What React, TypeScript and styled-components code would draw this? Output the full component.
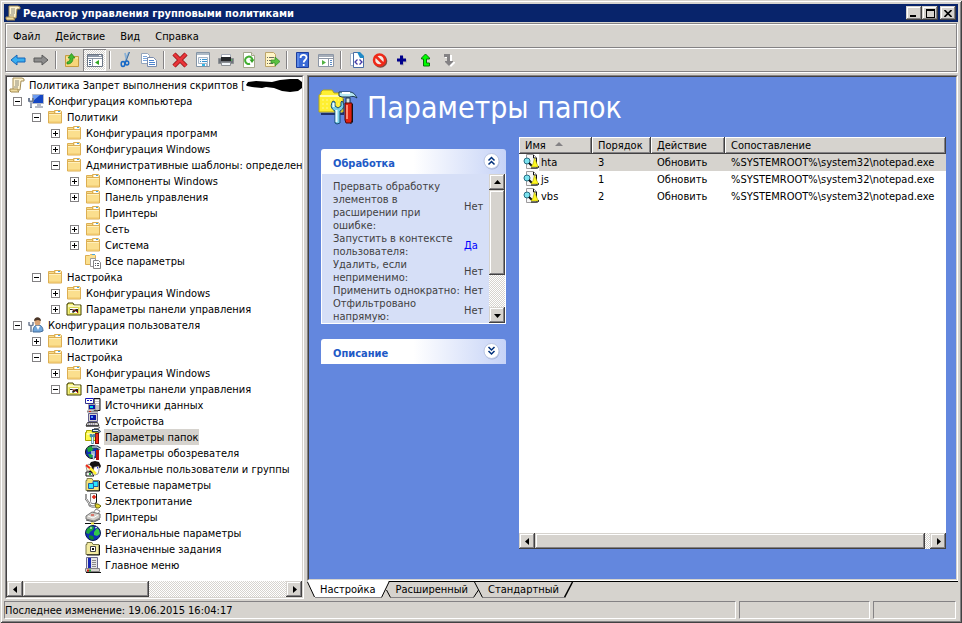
import React from "react";
import styled, { createGlobalStyle, css } from "styled-components";

const face = "#d6d3ce";
const gray = "#848284";
const dark = "#424142";
const blue = "#6387de";
const font = '"DejaVu Sans Condensed", "DejaVu Sans", sans-serif';

const raised = css`
  background: ${face};
  box-shadow: inset -1px -1px ${dark}, inset 1px 1px ${face}, inset -2px -2px ${gray}, inset 2px 2px #fff;
`;

const Global = createGlobalStyle`
  * { box-sizing: border-box; }
  body { margin: 0; background: ${face}; color: #000; font: 11px/16px ${font}; }
  button { font: inherit; color: inherit; margin: 0; padding: 0; border: 0; background: none; }
  ul { list-style: none; margin: 0; padding: 0; }
  svg { display: block; flex: none; }
`;

/* ---------- window ---------- */
const Window = styled.div`
  display: flex;
  flex-direction: column;
  height: 100vh;
  padding: 4px;
  background: ${face};
  box-shadow: inset 1px 1px ${face}, inset -1px -1px ${dark}, inset 2px 2px #fff, inset -2px -2px ${gray};
`;
const TitleBar = styled.header`
  display: flex;
  align-items: center;
  gap: 2px;
  height: 18px;
  padding: 0 2px 0 1px;
  background: #08246b;
  color: #fff;
`;
const WindowTitle = styled.h1`
  flex: 1;
  margin: 0;
  padding-top: 2px;
  font-size: 11px;
  font-weight: bold;
`;
const CaptionButton = styled.button<{ $spaced?: boolean }>`
  ${raised}
  display: grid;
  place-items: center;
  width: 16px;
  height: 14px;
  margin-left: ${(p) => (p.$spaced ? 0 : -2)}px;
`;
const Bars = styled.div`
  margin: 1px 1px 0;
  border: 1px solid ${gray};
  box-shadow: 1px 1px 0 #fff, inset 1px 1px 0 #fff;
`;
const MenuBar = styled.nav`
  display: flex;
  gap: 15px;
  align-items: center;
  height: 24px;
  padding: 2px 7px 0;
  border-bottom: 1px solid ${gray};
`;
const MenuItem = styled.button``;
const ToolBar = styled.div`
  display: flex;
  align-items: center;
  height: 23px;
  border-top: 1px solid #fff;
`;
const ToolButton = styled.button<{ $pressed?: boolean }>`
  display: flex;
  align-items: center;
  justify-content: center;
  width: 23px;
  height: 22px;
  ${(p) =>
    p.$pressed &&
    css`
      background: repeating-conic-gradient(#fff 0 25%, ${face} 0 50%) 0 0 / 2px 2px;
      box-shadow: inset 1px 1px ${gray}, inset -1px -1px #fff;
    `}
`;
const Separator = styled.span`
  width: 2px;
  height: 18px;
  margin: 0 3px;
  border-left: 1px solid ${gray};
  border-right: 1px solid #fff;
`;

/* ---------- panes ---------- */
const Body = styled.div`
  display: flex;
  flex: 1;
  min-height: 0;
  gap: 3px;
  margin: 3px 0 2px 1px;
`;
const Sunken = styled.div`
  display: flex;
  flex-direction: column;
  flex: 1;
  min-height: 0;
  min-width: 0;
  border: 1px solid;
  border-color: ${dark} ${face} ${face} ${dark};
`;
const TreePane = styled.aside`
  display: flex;
  flex: none;
  width: 32%;
  min-width: 240px;
  max-width: 299px;
  border: 1px solid;
  border-color: ${gray} #fff #fff ${gray};
`;
const Tree = styled.ul`
  flex: 1;
  min-height: 0;
  overflow: hidden;
  background: #fff;
`;
const TreeRow = styled.li<{ $level: number }>`
  display: flex;
  align-items: center;
  height: 16px;
  padding-left: ${(p) => 2 + p.$level * 19}px;
  white-space: nowrap;
`;
const Expander = styled.button`
  display: grid;
  place-items: center;
  flex: none;
  width: 9px;
  height: 9px;
  margin-left: -15px;
  margin-right: 6px;
  border: 1px solid ${gray};
  background: #fff;
`;
const TreeLabel = styled.span<{ $selected?: boolean }>`
  height: 16px;
  margin-left: 3px;
  padding: 0 1px;
  line-height: 18px;
  background: ${(p) => (p.$selected ? face : "transparent")};
`;

const Bar = styled.div<{ $vertical?: boolean }>`
  display: flex;
  flex: none;
  flex-direction: ${(p) => (p.$vertical ? "column" : "row")};
  ${(p) => (p.$vertical ? "width" : "height")}: 16px;
  background: repeating-conic-gradient(#fff 0 25%, ${face} 0 50%) 0 0 / 2px 2px;
`;
const BarButton = styled.button`
  ${raised}
  display: grid;
  place-items: center;
  width: 16px;
  height: 16px;
  flex: none;
`;
const Thumb = styled.div<{ $grow: number }>`
  ${raised}
  flex: ${(p) => p.$grow} 0 0;
`;
const Track = styled.div<{ $grow: number }>`
  flex: ${(p) => p.$grow} 0 0;
`;

const DetailPane = styled.main`
  display: flex;
  flex-direction: column;
  flex: 1;
  min-width: 0;
`;
const DetailFrame = styled.div`
  display: flex;
  flex: 1;
  min-height: 0;
  border: 1px solid;
  border-color: ${gray} #fff #fff ${gray};
`;
const Detail = styled.div`
  display: flex;
  flex-direction: column;
  flex: 1;
  min-height: 0;
  padding: 0 10px 30px 9px;
  background: ${blue};
`;
const Heading = styled.div`
  display: flex;
  align-items: center;
  gap: 9px;
  height: 60px;
  padding-top: 2px;
  color: #fff;
`;
const HeadingText = styled.h2`
  margin: 0;
  font-size: 30px;
  line-height: 36px;
  font-weight: normal;
`;
const Columns = styled.div`
  display: flex;
  flex: 1;
  min-height: 0;
  gap: 13px;
  padding-left: 3px;
`;
const Cards = styled.div`
  display: flex;
  flex-direction: column;
  flex: none;
  gap: 15px;
  width: 185px;
  padding-top: 12px;
`;
const Card = styled.section``;
const CardHeader = styled.div`
  display: flex;
  align-items: center;
  justify-content: space-between;
  height: 25px;
  padding: 0 6px 0 12px;
  border-radius: 3px 3px 0 0;
  background: linear-gradient(90deg, #fff 50%, #c6d3f7);
`;
const CardTitle = styled.h3`
  margin: 4px 0 0;
  font-size: 11px;
  color: #2159c6;
`;
const CardBody = styled.div`
  display: flex;
  border: 1px solid #fff;
  border-top: 0;
  background: #d6dff7;
`;
const Properties = styled.table`
  flex: 1;
  margin: 6px 0 0 11px;
  border-collapse: collapse;
  line-height: 13px;
  color: #424142;
  white-space: nowrap;
`;
const PropertyName = styled.th`
  padding: 0;
  font-weight: normal;
  text-align: left;
`;
const PropertyValue = styled.td<{ $on?: boolean }>`
  width: 25px;
  padding: 0;
  vertical-align: middle;
  color: ${(p) => (p.$on ? "#0000ff" : "inherit")};
`;

const ListBox = styled.section`
  display: flex;
  flex-direction: column;
  flex: 1;
  min-width: 0;
  overflow: hidden;
  background: #fff;
`;
const ListArea = styled.div`
  flex: 1;
  min-height: 0;
`;
const ListTable = styled.table`
  width: 100%;
  table-layout: fixed;
  border-collapse: collapse;
  white-space: nowrap;
`;
const ColumnHead = styled.th<{ $width?: number }>`
  height: 17px;
  width: ${(p) => (p.$width ? p.$width + "px" : "auto")};
  padding: 1px 6px 0;
  background: ${face};
  box-shadow: inset -1px -1px ${dark}, inset 1px 1px #fff, inset -2px -2px ${gray};
  font-weight: normal;
  line-height: 16px;
  text-align: left;
`;
const SortMark = styled.span`
  display: inline-block;
  margin: 0 0 3px 9px;
  border: 4px solid transparent;
  border-top: 0;
  border-bottom-color: ${gray};
`;
const Row = styled.tr<{ $selected?: boolean }>`
  height: 17px;
  background: ${(p) => (p.$selected ? face : "#fff")};
`;
const Cell = styled.td<{ $first?: boolean }>`
  padding: ${(p) => (p.$first ? "0" : "1px 6px 0")};
  line-height: 16px;
`;
const NameCell = styled.div`
  display: flex;
  gap: 2px;
  height: 17px;
  line-height: 18px;
`;
const FileIcon = styled.span`
  padding: 0 0 1px 4px;
  background: #fff;
`;

const Tabs = styled.div`
  display: flex;
  height: 18px;
  border-top: 1px solid #000;
  background: ${face};
`;
const Tab = styled.button<{ $active?: boolean }>`
  height: ${(p) => (p.$active ? 17 : 16)}px;
  margin-top: ${(p) => (p.$active ? -1 : 0)}px;
  padding: 0 5px;
  line-height: 15px;
  background: ${(p) => (p.$active ? "#fff" : face)};
  border-bottom: 1px solid ${gray};
`;
const TabEdge = styled.svg`
  margin-top: -1px;
`;

const StatusBar = styled.footer`
  display: flex;
  gap: 3px;
  height: 18px;
  padding-right: 2px;
`;
const StatusCell = styled.div<{ $width?: number }>`
  flex: ${(p) => (p.$width ? `0 0 ${p.$width}px` : "1")};
  min-width: 0;
  border: 1px solid;
  border-color: ${gray} #fff #fff ${gray};
  line-height: 18px;
  white-space: nowrap;
`;

/* ---------- icons ---------- */
const glyphs: Record<string, React.ReactNode> = {
  scroll: (
    <>
      <path d="M4 1h9l2 1v2h-3l-1 9H4z" fill="#fff3cf" stroke="#a48c52" />
      <path d="M1 12h8v2l1 1H2l-1-1z" fill="#f0dca0" stroke="#a48c52" />
      <path d="M6 4h4M6 6h4M6 8h4M5 10h4" stroke="#8c8a7b" />
    </>
  ),
  folder: (
    <>
      <path d="M1.500 2.500h6v3h-6z" fill="#f7dc8c" stroke="#dcae52" />
      <path d="M7.500 1.500h6l1 1v4h-7z" fill="#fbe9b0" stroke="#dcae52" />
      <path d="M9 3h4" stroke="#fff" strokeWidth="2" />
      <path d="M11 2.500h2" stroke="#4aa6de" />
      <path d="M1.500 4.500h13v9.500h-13z" fill="#fbdf8e" stroke="#dcae52" />
      <path d="M2 5.500h12" stroke="#fff0bd" />
      <path d="M2 13h12" stroke="#efc66b" />
    </>
  ),
  allSettings: (
    <>
      <path d="M.5 2.500h4l1-1h4l1 1v9H.5z" fill="#fbe08f" stroke="#dcae52" />
      <path d="M7 1.500h3" stroke="#4aa6de" />
      <path d="M5.500 5.500h5v8h-5z" fill="#fff" stroke="#9c9a9c" />
      <path d="M8.500 7.500h5l2 2v6h-7z" fill="#fff" stroke="#848284" />
      <path d="M10 10.500h1M12 10.500h2M10 12.500h1M12 12.500h2" stroke="#5a5d63" />
    </>
  ),
  computer: (
    <>
      <path d="M4.500 1.500h11v9h-11z" fill="#1547c4" stroke="#b5bac6" />
      <path d="M5 2h7L5 8z" fill="#6d9cf0" />
      <path d="M9 11h4v2h2v2H7v-2h2z" fill="#b5bac6" />
      <path d="M1 5v3l2 1 2-1V5M3 9v6" fill="none" stroke="#707d94" strokeWidth="2" />
      <path d="M3 9v5" stroke="#c6cede" />
    </>
  ),
  user: (
    <>
      <path d="M5 15c0-5 2-7 5-7s5 2 5 6l-3 1z" fill="#70a6dc" stroke="#426d9c" />
      <path d="M8 9h4l-2 4z" fill="#fff" />
      <ellipse cx="9.500" cy="5" rx="3" ry="3.500" fill="#d8a274" />
      <path d="M6 4c0-5 7-5 7 0l-3-1z" fill="#4b3627" />
      <path d="M1 5v3l2 1 2-1V5M3 9v6" fill="none" stroke="#707d94" strokeWidth="1.500" />
    </>
  ),
  controlPanel: (
    <>
      <path d="M1 3h1V2h5l1 2h7v10H1z" fill="#f5f27b" stroke="#424100" />
      <path d="M2 5h12" stroke="#fff" />
      <path d="M3.500 6.500h9v6h-9z" fill="#fff" stroke="#d6d352" />
      <path d="M4 8h2l2 1 2-1h2v3h-1l-1-1-3 2-1-1 1-2H4z" fill="#222" />
      <path d="M7 9h2M10 10l2 2" stroke="#c61810" />
    </>
  ),
  data: (
    <>
      <path d="M9 1.500h6v12H9z" fill="#c6c3c6" stroke="#111" />
      <path d="M10 3.500h4M10 5.500h4M10 7.500h4" stroke="#fff" />
      <path d="M.5 1.500h8v5h-8z" fill="#fff" stroke="#31318c" />
      <path d="M2 3.500h2M5 3.500h2" stroke="#1010c6" />
      <path d="M1 1.500h7" stroke="#1010c6" />
      <path d="M3.500 7.500h7v5h-7z" fill="#0a16a8" stroke="#a5a2a5" />
      <path d="M5 9h3v2H5z" fill="#00d6e8" />
      <path d="M2 14.500h11" stroke="#8c8a8c" strokeWidth="2" />
      <path d="M4 14.500h2" stroke="#e02010" />
    </>
  ),
  device: (
    <>
      <path d="M3.500.5h9v8h-9z" fill="#d6d3ce" stroke="#63618c" />
      <path d="M5 2h6v5H5z" fill="#0a16a8" />
      <path d="M6 3h2v2H6z" fill="#4f9dff" />
      <path d="M2.500 9.500h10l1.500 3H1z" fill="#d6d3ce" stroke="#444" />
      <path d="M3 11h8" stroke="#63618c" strokeDasharray="1 1" />
      <path d="M1 13.500h12l2 1-2 1H9" fill="none" stroke="#6b6b6b" />
    </>
  ),
  folderTools: (
    <>
      <path d="M.5 3.500h1v-2h5l1 2h5v8H.5z" fill="#fff94a" stroke="#a5a200" />
      <path d="M2 5h9" stroke="#fff" />
      <path d="M7 1.500h6l2 2" fill="none" stroke="#29415a" strokeWidth="3" />
      <path d="M8 1.500h5l2 2" fill="none" stroke="#e6f7ff" />
      <path d="M12 4v11" stroke="#7b0808" strokeWidth="4" />
      <path d="M12 5v9" stroke="#ef2918" strokeWidth="2" />
      <path d="M6 5v2l1.500 1L9 7V5M7.500 8v7" fill="none" stroke="#4a8ca5" strokeWidth="2.500" />
      <path d="M7.500 8v6" stroke="#d6f7ff" />
    </>
  ),
  globeTools: (
    <>
      <circle cx="7" cy="7" r="6.500" fill="#1031b5" stroke="#111" />
      <path d="M2 3l4-2 3 2-2 3-4 1zM3 9l4 0 1 3-3 1z" fill="#20a838" />
      <path d="M7 2h5l3 2" fill="none" stroke="#29415a" strokeWidth="3" />
      <path d="M7 2h5l3 2" fill="none" stroke="#e6f7ff" />
      <path d="M12.500 5v10" stroke="#b51010" strokeWidth="3" />
      <path d="M7 6v3l2 1V6M8.500 9v6" fill="none" stroke="#c6d6de" strokeWidth="1.500" />
    </>
  ),
  people: (
    <>
      <path d="M4 4l2-3 4-1 4 1 2 4-1 2-5-1-2 6-4-1z" fill="#111" />
      <path d="M9 6l5-1v4l-1 4-3 1-2-3z" fill="#fff" stroke="#555" strokeWidth=".6" />
      <path d="M1 5l3-2 3 3-2 4H2z" fill="#f7f2d6" stroke="#555" strokeWidth=".6" />
      <path d="M1 4l6 5" stroke="#ef2918" strokeWidth="2" />
      <path d="M5 7l6 6" stroke="#ffef31" strokeWidth="2.500" />
      <path d="M1 11h5l3 4H1z" fill="#efefef" stroke="#111" />
      <path d="M4 13h2" stroke="#20a838" strokeWidth="2" />
      <path d="M12.500 6v1.500" stroke="#2038ef" />
    </>
  ),
  network: (
    <>
      <path d="M1 3.500h1v-2h5l1 2h6v10H1z" fill="#f5e27b" stroke="#848252" />
      <path d="M14.500 4v10H2" fill="none" stroke="#111" />
      <path d="M8 4.500h5v5H8z" fill="#29e6ff" stroke="#2159a5" />
      <path d="M3.500 6.500h5v5h-5z" fill="#29e6ff" stroke="#2159a5" />
    </>
  ),
  power: (
    <>
      <path d="M5.500.5h6v8l-1 2h-4l-1-2z" fill="#f7f7f7" stroke="#848284" />
      <path d="M11.500 1v8l-1 2" fill="none" stroke="#111" />
      <path d="M7 4h4M9 2v4" stroke="#e02010" strokeWidth="1.500" />
      <path d="M1 1v5l3 4c0 4 4 4 7 3" fill="none" stroke="#555" strokeWidth="2" />
      <path d="M1 1v5l3 4c0 4 4 4 7 3" fill="none" stroke="#e6e6e6" />
      <path d="M10 11l3 0 3 2-2 2h-3z" fill="#e6d631" stroke="#6b6910" />
    </>
  ),
  printer: (
    <>
      <path d="M8 4l3-4 4 2-3 4z" fill="#fff" stroke="#848284" />
      <path d="M1 7l6-4 8 2v4l-6 3-8-2z" fill="#d0cdc8" stroke="#777" />
      <path d="M3 7l5 2 5-3" fill="none" stroke="#fff" />
      <path d="M6 6h3" stroke="#e02010" />
      <path d="M1 11l8 2 6-3" fill="none" stroke="#555" />
      <path d="M0 14.500h16" stroke="#111" />
      <path d="M6 14.500h3" stroke="#e6d631" strokeWidth="2" />
    </>
  ),
  globe: (
    <>
      <circle cx="8" cy="8" r="7.500" fill="#1031b5" stroke="#0a1a52" />
      <path d="M2 4l4-3 3 1-1 3-3 2-1 2-3-1z" fill="#20a838" />
      <path d="M9 7l3-4 2 2 1 4-3 2-3-1z" fill="#31c84a" />
      <path d="M4 10l4 1 1 3-2 1-3-2z" fill="#108828" />
      <path d="M10 3l2-1M5 3l2 0" stroke="#fff" />
    </>
  ),
  tasks: (
    <>
      <path d="M1 3.500h1v-2h5l1 2h6v10H1z" fill="#f2eaa0" stroke="#7b794a" />
      <path d="M14.500 4v10H2" fill="none" stroke="#111" />
      <path d="M5.500 5.500h5v5h-5z" fill="#fff" stroke="#424142" />
      <path d="M7 7h2v2H7z" fill="#111" />
    </>
  ),
  startMenu: (
    <>
      <path d="M1.500.5h11v11h-11z" fill="#e6e6e6" stroke="#6b6b8c" />
      <path d="M3 1h3v10H3z" fill="#1826b5" />
      <path d="M7 3.500h4M7 5.500h4M7 7.500h4M7 9.500h4" stroke="#8c8a8c" />
      <path d="M.5 11.500h14v3H.5z" fill="#d6d3ce" stroke="#848284" />
      <path d="M1 15.500h15" stroke="#111" />
      <path d="M2 13.500h2" stroke="#e02010" strokeWidth="2" />
      <path d="M4 13.500h2" stroke="#20a838" strokeWidth="2" />
    </>
  ),
  back: <path d="M1 8l6-5v3h8v4H7v3z" fill="#39aef0" stroke="#1565b8" />,
  forward: <path d="M15 8L9 3v3H1v4h8v3z" fill="#8c8c8c" stroke="#5a5a5a" />,
  up: (
    <>
      <path d="M1.500 3.500h5l1 1h7v10h-13z" fill="#f7d67b" stroke="#c69c42" />
      <path d="M2 6h12" stroke="#fff0b5" />
      <path d="M3 10c2 0 3-2 3-4H4l3.500-4.500L11 6H9c0 4-2 6-6 6z" fill="#42ba31" stroke="#218418" strokeWidth=".7" />
    </>
  ),
  treeView: (
    <>
      <path d="M.5 2.500h15v12H.5z" fill="#fff" stroke="#6b7584" />
      <path d="M1 4h14" stroke="#8c96a5" strokeWidth="2" />
      <path d="M12 3.500h2" stroke="#fff" />
      <path d="M1 6.500h14M5.500 6v8" stroke="#8c96a5" />
      <path d="M2 8.500h2M2 10.500h2M2 12.500h2" stroke="#42658c" />
      <path d="M12 8v5l-4-2.500z" fill="#31a821" />
    </>
  ),
  cut: (
    <>
      <path d="M11 0L7 10M7 1l2 9" stroke="#8cb2d6" strokeWidth="1.800" />
      <path d="M11.500 0L8 9" stroke="#426d9c" />
      <ellipse cx="5" cy="12" rx="1.800" ry="2.500" fill="none" stroke="#1869c6" strokeWidth="1.500" />
      <ellipse cx="9" cy="11" rx="1.700" ry="2" fill="none" stroke="#1869c6" strokeWidth="1.500" />
    </>
  ),
  copy: (
    <>
      <path d="M.5 1.500h6l2 2v8h-8z" fill="#fff" stroke="#94a5bd" />
      <path d="M2 4.500h4M2 6.500h4M2 8.500h4" stroke="#7ba6de" />
      <path d="M6.500 5.500h6l3 3v6h-9z" fill="#fff" stroke="#7b8cad" />
      <path d="M8 8.500h5M8 10.500h6M8 12.500h6" stroke="#4a82ce" />
    </>
  ),
  remove: (
    <>
      <path d="M2 2l12 12M14 2L2 14" stroke="#8c1010" strokeWidth="4.500" />
      <path d="M2 2l12 12M14 2L2 14" stroke="#e8353a" strokeWidth="3" />
    </>
  ),
  properties: (
    <>
      <path d="M1.500.5h13v14h-13z" fill="#fff" stroke="#8494a5" />
      <path d="M2 2h12" stroke="#adbac6" strokeWidth="2" />
      <path d="M3.500 5.500h9v6h-9z" fill="#f5fbff" stroke="#a5b5c6" />
      <path d="M5 7.500h1M7 7.500h5M5 9.500h1M7 9.500h5" stroke="#3992ce" />
      <path d="M7 13h3" stroke="#31b6e7" strokeWidth="2" />
      <path d="M11 13h2" stroke="#adbac6" strokeWidth="2" />
    </>
  ),
  print: (
    <>
      <path d="M3.500 2.500h9v4h-9z" fill="#fff" stroke="#a5aab5" />
      <path d="M.5 6.500h15v5H.5z" fill="#70747b" stroke="#8c9094" />
      <path d="M3 5h10v4H3z" fill="#26282b" />
      <path d="M3.500 10.500h9v3h-9z" fill="#f2f6fb" stroke="#8c9094" />
      <path d="M13 8h1" stroke="#42ef42" />
    </>
  ),
  refresh: (
    <>
      <path d="M2.500.5h8l3 3v12h-11z" fill="#fff" stroke="#a5a68c" />
      <path d="M10.500.5v3h3" fill="#e6e3d6" stroke="#a5a68c" />
      <path d="M11.500 8A3.700 3.700 0 1 0 9 11.800" fill="none" stroke="#42ae31" strokeWidth="2" />
      <path d="M13.500 7.500h-5L11 11z" fill="#31a021" />
    </>
  ),
  exportList: (
    <>
      <path d="M1.500.5h8l2 2v12h-10z" fill="#fff5c6" stroke="#bda56b" />
      <path d="M3 5.500h1M5 5.500h5M3 8.500h1M5 8.500h4M3 11.500h1M5 11.500h4" stroke="#6b6b63" />
      <path d="M7 8h4V5l5 4.500-5 4.500v-3H7z" fill="#5bc142" stroke="#2f8a22" strokeWidth=".7" />
    </>
  ),
  help: (
    <>
      <path d="M1.500.5h12v15h-12z" fill="#3969d6" stroke="#1c3d9c" />
      <path d="M3 1v14" stroke="#7ba6f7" />
      <path d="M5.500 6c0-4 6-4 6-.5 0 2.500-2.800 2.500-2.800 5M8.700 12v2" fill="none" stroke="#fff" strokeWidth="1.800" />
    </>
  ),
  actionPane: (
    <>
      <path d="M.5 2.500h15v12H.5z" fill="#fff" stroke="#8c96a5" />
      <path d="M1 4h14" stroke="#a5adb8" strokeWidth="2" />
      <path d="M1 6.500h14M10.500 6v8" stroke="#8c96a5" />
      <path d="M4 8v5l4-2.500z" fill="#52b242" />
      <path d="M12 8.500h2M12 10.500h2M12 12.500h2" stroke="#5a8cc6" />
    </>
  ),
  xml: (
    <>
      <path d="M1.500 1.500h8v12h-8z" fill="#fff" stroke="#a5b2c6" />
      <path d="M4.500.5h6l4 4v11h-10z" fill="#fff" stroke="#4a6da5" />
      <path d="M8 0h3l4 4v2h-4z" fill="#218ac6" />
      <path d="M8.500 7.500L6 10l2.500 2.500M10.500 7.500L13 10l-2.500 2.500" fill="none" stroke="#4238a5" strokeWidth="1.300" />
    </>
  ),
  forbid: (
    <>
      <circle cx="8.500" cy="9" r="5.800" fill="none" stroke="#7b4a42" strokeWidth="2" />
      <circle cx="7.500" cy="8" r="5.500" fill="#f3e9e4" stroke="#ef2918" strokeWidth="2.500" />
      <path d="M3.500 4l8 8" stroke="#ef2918" strokeWidth="2.500" />
    </>
  ),
  plus: (
    <>
      <path d="M3 9h9M7.500 4.500v9" stroke="#bdbab5" strokeWidth="3" />
      <path d="M2 8h9M6.500 3.500v9" stroke="#00008c" strokeWidth="3" />
    </>
  ),
  moveUp: <path d="M7.500 2L3.500 6v1h2v7h6v-3h-3V7h3V6z" fill="#00ff00" stroke="#087308" />,
  moveDown: (
    <>
      <path d="M4 3h7v7h3v1l-4 4-4-4v-1h2V6H4z" fill="#fff" />
      <path d="M3 2h6v7h3v1l-4 4-4-4V9h2V5H3z" fill="#848284" />
    </>
  ),
  file: (
    <>
      <path d="M3.500.5h7l3 3v11h-10z" fill="#f7f7f7" stroke="#9c9a9c" />
      <path d="M10.500 1v3h3v6" fill="none" stroke="#111" />
      <circle cx="4" cy="7" r="3" fill="#7be3ef" stroke="#296d84" />
      <path d="M6 9l3 3" stroke="#111" strokeWidth="2" />
      <path d="M11.500 4l2.500 6 1.500 3H8l2-3z" fill="#fff721" stroke="#a5a200" strokeWidth=".6" />
      <path d="M8 14h7l1-2" fill="none" stroke="#111" />
    </>
  ),
};

function Icon({ name, size = 16 }: { name: string; size?: number }) {
  return (
    <svg width={size} height={size} viewBox="0 0 16 16" fill="none" aria-hidden="true">
      {glyphs[name]}
    </svg>
  );
}

const arrows = { left: "M5 0v7L1 3.500z", right: "M2 0v7l4-3.500z", up: "M0 5h7L3.500 1z", down: "M0 2h7L3.500 6z" };
const arrowNames = { left: "Влево", right: "Вправо", up: "Вверх", down: "Вниз" };
function ArrowButton({ dir }: { dir: keyof typeof arrows }) {
  return (
    <BarButton aria-label={arrowNames[dir]}>
      <svg width="7" height="7" viewBox="0 0 7 7">
        <path d={arrows[dir]} />
      </svg>
    </BarButton>
  );
}

function ScrollBar({ vertical, thumb, track }: { vertical?: boolean; thumb: number; track: number }) {
  return (
    <Bar $vertical={vertical}>
      <ArrowButton dir={vertical ? "up" : "left"} />
      <Thumb $grow={thumb} />
      <Track $grow={track} />
      <ArrowButton dir={vertical ? "down" : "right"} />
    </Bar>
  );
}

function HeadingIcon() {
  return (
    <svg width="40" height="38" viewBox="0 0 40 38" fill="none" aria-hidden="true">
      <path d="M3 25h22M25 10v16" stroke="#20306b" strokeWidth="2" />
      <path d="M1 23V6l2-1V3l2-2h9l2 3h9v19z" fill="#ffef31" stroke="#b5a518" />
      <path d="M2 7h21" stroke="#fffbb0" strokeWidth="2" />
      <path d="M4 11h17M4 15h17M4 19h17" stroke="#fff98c" strokeDasharray="2 2" />
      <path d="M21 3h10c4 0 6 2 8 6-3-2-5-2-7-1h-8l-3-1z" fill="#b5e7f2" stroke="#18344a" />
      <path d="M24 4h8" stroke="#fff" strokeWidth="2" />
      <path d="M28 9h4v6h-4z" fill="#d6e3e8" stroke="#18344a" />
      <path d="M27 14h7v17l-1 3h-5l-1-3z" fill="#de2110" stroke="#520808" />
      <path d="M29 16v14" stroke="#ff8c73" strokeWidth="2" />
      <path d="M34.500 15v18l-2 2" stroke="#111" />
      <path d="M15 12c-3 4-2 8 2 10v12l2 1 3-1V22c4-2 5-6 2-10l-1 1v4l-3 2-3-2v-4z" fill="#7bcfe7" stroke="#184a73" />
      <path d="M18.500 21v12M15.500 14v4" stroke="#f0ffff" strokeWidth="2" />
    </svg>
  );
}

function Chevrons({ down }: { down?: boolean }) {
  return (
    <svg width="17" height="17" viewBox="0 0 17 17" fill="none" aria-hidden="true">
      <circle cx="9" cy="9" r="7.500" fill="#a3b1d6" />
      <circle cx="8.500" cy="8" r="7.500" fill="#fff" stroke="#bac6e3" />
      <path
        d={down ? "M5.500 4l3 3 3-3M5.500 8l3 3 3-3" : "M5.500 7.500l3-3 3 3M5.500 11.500l3-3 3 3"}
        stroke="#00307b"
        strokeWidth="1.500"
      />
    </svg>
  );
}

/* ---------- data ---------- */
type Node = [level: number, state: "+" | "-" | "", icon: string, label: string];
const nodes: Node[] = [
  [0, "", "scroll", "Политика Запрет выполнения скриптов ["],
  [1, "-", "computer", "Конфигурация компьютера"],
  [2, "-", "folder", "Политики"],
  [3, "+", "folder", "Конфигурация программ"],
  [3, "+", "folder", "Конфигурация Windows"],
  [3, "-", "folder", "Административные шаблоны: определени"],
  [4, "+", "folder", "Компоненты Windows"],
  [4, "+", "folder", "Панель управления"],
  [4, "", "folder", "Принтеры"],
  [4, "+", "folder", "Сеть"],
  [4, "+", "folder", "Система"],
  [4, "", "allSettings", "Все параметры"],
  [2, "-", "folder", "Настройка"],
  [3, "+", "folder", "Конфигурация Windows"],
  [3, "+", "controlPanel", "Параметры панели управления"],
  [1, "-", "user", "Конфигурация пользователя"],
  [2, "+", "folder", "Политики"],
  [2, "-", "folder", "Настройка"],
  [3, "+", "folder", "Конфигурация Windows"],
  [3, "-", "controlPanel", "Параметры панели управления"],
  [4, "", "data", "Источники данных"],
  [4, "", "device", "Устройства"],
  [4, "", "folderTools", "Параметры папок"],
  [4, "", "globeTools", "Параметры обозревателя"],
  [4, "", "people", "Локальные пользователи и группы"],
  [4, "", "network", "Сетевые параметры"],
  [4, "", "power", "Электропитание"],
  [4, "", "printer", "Принтеры"],
  [4, "", "globe", "Региональные параметры"],
  [4, "", "tasks", "Назначенные задания"],
  [4, "", "startMenu", "Главное меню"],
];

const tools: ([icon: string, label: string] | null)[] = [
  ["back", "Назад"],
  ["forward", "Вперед"],
  null,
  ["up", "На уровень вверх"],
  ["treeView", "Дерево консоли"],
  null,
  ["cut", "Вырезать"],
  ["copy", "Копировать"],
  null,
  ["remove", "Удалить"],
  ["properties", "Свойства"],
  ["print", "Печать"],
  ["refresh", "Обновить"],
  ["exportList", "Экспортировать список"],
  null,
  ["help", "Справка"],
  ["actionPane", "Панель действий"],
  null,
  ["xml", "Показать XML"],
  ["forbid", "Отключить"],
  ["plus", "Добавить"],
  ["moveUp", "Переместить вверх"],
  ["moveDown", "Переместить вниз"],
];

const properties: [lines: string[], value: string][] = [
  [["Прервать обработку", "элементов в", "расширении при", "ошибке:"], "Нет"],
  [["Запустить в контексте", "пользователя:"], "Да"],
  [["Удалить, если", "неприменимо:"], "Нет"],
  [["Применить однократно:"], "Нет"],
  [["Отфильтровано", "напрямую:"], "Нет"],
];

const files: [name: string, order: number][] = [
  ["hta", 3],
  ["js", 1],
  ["vbs", 2],
];

export default function App() {
  return (
    <>
      <Global />
      <Window>
        <TitleBar>
          <Icon name="scroll" />
          <WindowTitle>Редактор управления групповыми политиками</WindowTitle>
          <CaptionButton aria-label="Свернуть">
            <svg width="8" height="8" viewBox="0 0 8 8">
              <path d="M0 6h6v2H0z" />
            </svg>
          </CaptionButton>
          <CaptionButton aria-label="Развернуть">
            <svg width="9" height="9" viewBox="0 0 9 9">
              <path d="M0 0h9v9H0zM1 2v6h7V2z" fillRule="evenodd" />
            </svg>
          </CaptionButton>
          <CaptionButton $spaced aria-label="Закрыть">
            <svg width="8" height="7" viewBox="0 0 8 7">
              <path d="M.5 0l7 7M7.500 0l-7 7" stroke="#000" strokeWidth="1.600" />
            </svg>
          </CaptionButton>
        </TitleBar>

        <Bars>
          <MenuBar>
            {["Файл", "Действие", "Вид", "Справка"].map((item) => (
              <MenuItem key={item}>{item}</MenuItem>
            ))}
          </MenuBar>
          <ToolBar>
            {tools.map((tool, i) =>
              tool ? (
                <ToolButton key={i} aria-label={tool[1]} $pressed={tool[0] === "treeView"}>
                  <Icon name={tool[0]} />
                </ToolButton>
              ) : (
                <Separator key={i} />
              ),
            )}
          </ToolBar>
        </Bars>

        <Body>
          <TreePane>
            <Sunken>
              <Tree>
                {nodes.map(([level, state, icon, label], i) => (
                  <TreeRow key={i} $level={level}>
                    {state && (
                      <Expander aria-label={state === "+" ? "Развернуть" : "Свернуть"}>
                        <svg width="5" height="5" viewBox="0 0 5 5">
                          <path d={state === "+" ? "M0 2h2V0h1v2h2v1H3v2H2V3H0z" : "M0 2h5v1H0z"} />
                        </svg>
                      </Expander>
                    )}
                    <Icon name={icon} />
                    <TreeLabel $selected={icon === "folderTools"}>{label}</TreeLabel>
                    {level === 0 && (
                      <svg width="56" height="14" viewBox="0 0 56 14" aria-hidden="true">
                        <path d="M0 7l2-3 8-1 16 1 8-2 10-1 8 0 4 3v6l-4 3-8 1-8-1-8-3-8-1-4 1-10-1-5-1z" />
                      </svg>
                    )}
                  </TreeRow>
                ))}
              </Tree>
              <ScrollBar thumb={126} track={138} />
            </Sunken>
          </TreePane>

          <DetailPane>
            <DetailFrame>
              <Sunken>
                <Detail>
                  <Heading>
                    <HeadingIcon />
                    <HeadingText>Параметры папок</HeadingText>
                  </Heading>
                  <Columns>
                    <Cards>
                      <Card>
                        <CardHeader>
                          <CardTitle>Обработка</CardTitle>
                          <button aria-label="Свернуть раздел">
                            <Chevrons />
                          </button>
                        </CardHeader>
                        <CardBody>
                          <Properties>
                            <tbody>
                              {properties.map(([lines, value]) => (
                                <tr key={lines[0]}>
                                  <PropertyName scope="row">
                                    {lines.map((line, i) => (
                                      <React.Fragment key={line}>
                                        {i > 0 && <br />}
                                        {line}
                                      </React.Fragment>
                                    ))}
                                  </PropertyName>
                                  <PropertyValue $on={value === "Да"}>{value}</PropertyValue>
                                </tr>
                              ))}
                            </tbody>
                          </Properties>
                          <ScrollBar vertical thumb={86} track={32} />
                        </CardBody>
                      </Card>
                      <Card>
                        <CardHeader>
                          <CardTitle>Описание</CardTitle>
                          <button aria-label="Развернуть раздел">
                            <Chevrons down />
                          </button>
                        </CardHeader>
                      </Card>
                    </Cards>

                    <ListBox>
                      <ListArea>
                        <ListTable>
                          <thead>
                            <tr>
                              <ColumnHead $width={73}>
                                Имя
                                <SortMark />
                              </ColumnHead>
                              <ColumnHead $width={59}>Порядок</ColumnHead>
                              <ColumnHead $width={74}>Действие</ColumnHead>
                              <ColumnHead>Сопоставление</ColumnHead>
                            </tr>
                          </thead>
                          <tbody>
                            {files.map(([name, order]) => (
                              <Row key={name} $selected={name === "hta"}>
                                <Cell $first>
                                  <NameCell>
                                    <FileIcon>
                                      <Icon name="file" />
                                    </FileIcon>
                                    {name}
                                  </NameCell>
                                </Cell>
                                <Cell>{order}</Cell>
                                <Cell>Обновить</Cell>
                                <Cell>%SYSTEMROOT%\system32\notepad.exe</Cell>
                              </Row>
                            ))}
                          </tbody>
                        </ListTable>
                      </ListArea>
                      <ScrollBar thumb={390} track={5} />
                    </ListBox>
                  </Columns>
                </Detail>
              </Sunken>
            </DetailFrame>
            <Tabs role="tablist">
              <TabEdge width="8" height="17" viewBox="0 0 8 17">
                <path d="M0 0h8v17z" fill="#fff" />
                <path d="M.5 1l7 15" stroke="#000" />
              </TabEdge>
              <Tab role="tab" aria-selected="true" $active>
                Настройка
              </Tab>
              <TabEdge width="10" height="17" viewBox="0 0 10 17" fill="none">
                <path d="M0 0h8L0 17z" fill="#fff" />
                <path d="M8.500 0L.5 16.500M5.500 9l4 7.500" stroke="#000" />
              </TabEdge>
              <Tab role="tab" aria-selected="false">
                Расширенный
              </Tab>
              <TabEdge width="10" height="17" viewBox="0 0 10 17" fill="none">
                <path d="M1.500 1l8 15.500M5.500 9L.5 16.500" stroke="#000" />
              </TabEdge>
              <Tab role="tab" aria-selected="false">
                Стандартный
              </Tab>
              <TabEdge width="10" height="17" viewBox="0 0 10 17" fill="none">
                <path d="M8.500 1L.5 16.500" stroke="#000" strokeWidth="1.500" />
              </TabEdge>
            </Tabs>
          </DetailPane>
        </Body>

        <StatusBar>
          <StatusCell>Последнее изменение: 19.06.2015 16:04:17</StatusCell>
          <StatusCell $width={131} />
          <StatusCell $width={83} />
        </StatusBar>
      </Window>
    </>
  );
}
